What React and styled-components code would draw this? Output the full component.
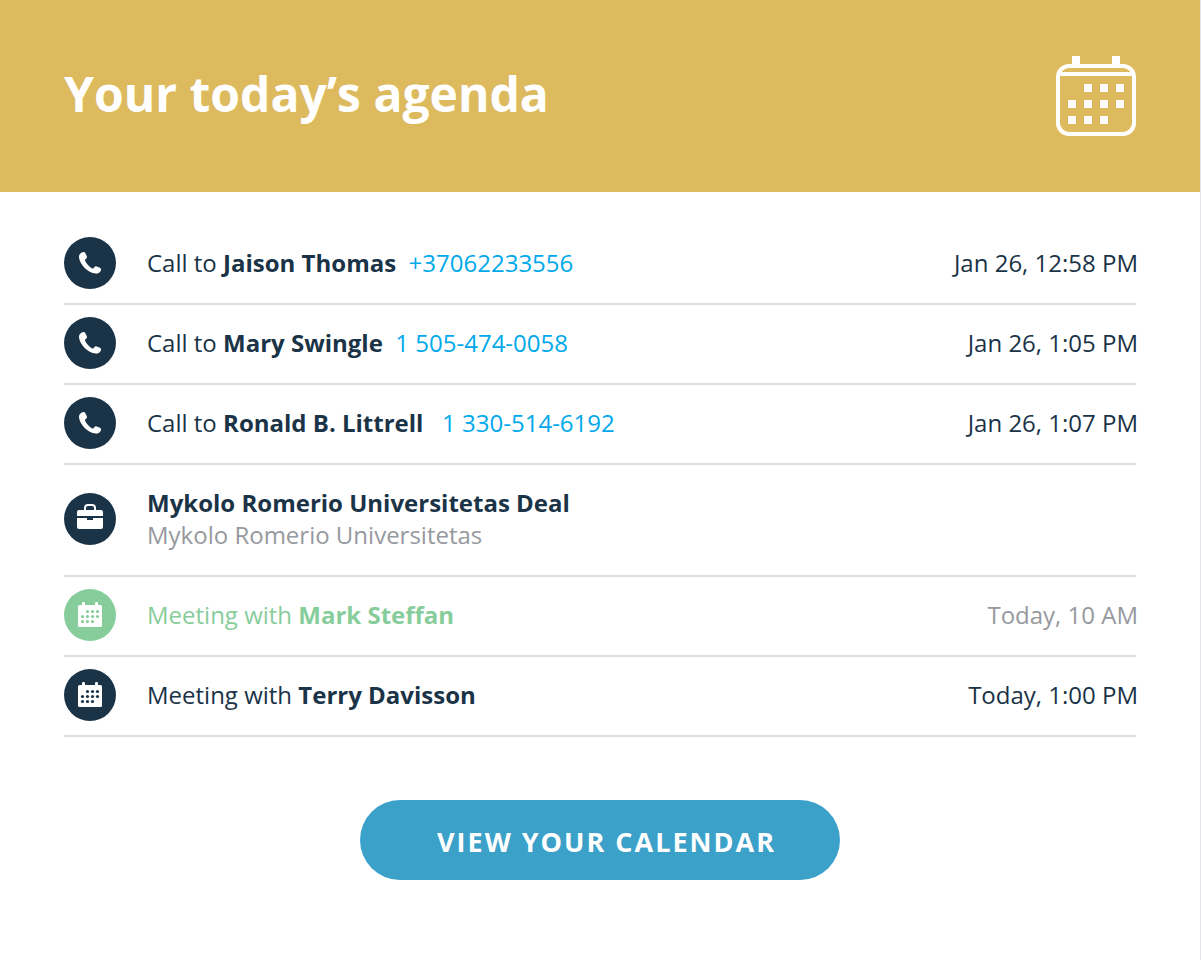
import styled, { createGlobalStyle } from 'styled-components';

const GlobalStyle = createGlobalStyle`
  * {
    box-sizing: border-box;
  }

  body {
    margin: 0;
    background: #fff;
    color: #1a3347;
    font-family: 'Open Sans', 'Noto Sans', sans-serif;
    font-size: 24px;
    line-height: 32px;
  }
`;

const Page = styled.div`
  min-height: 100vh;
  border-right: 1px solid #e4e4e7;
`;

const Header = styled.header`
  display: flex;
  align-items: center;
  justify-content: space-between;
  height: 192px;
  padding: 0 64px;
  background: #ddba5e;
  color: #fff;
`;

const Title = styled.h1`
  margin: 0;
  padding-bottom: 4px;
  font-size: 48px;
  line-height: 64px;
  font-weight: 700;
`;

const Main = styled.main`
  display: flex;
  flex-direction: column;
  align-items: center;
  padding: 33px 64px 80px;
`;

const List = styled.ul`
  align-self: stretch;
  margin: 0 0 63px;
  padding: 0;
  list-style: none;
`;

const Row = styled.li`
  display: flex;
  align-items: center;
  min-height: ${({ $tall }) => ($tall ? 112 : 80)}px;
  padding-bottom: 2px;
  border-bottom: 2px solid #dcdde1;
  color: ${({ $done }) => ($done ? '#87cd9b' : 'inherit')};
`;

const Badge = styled.span`
  display: flex;
  flex: none;
  width: 52px;
  height: 52px;
  margin-right: 31px;
  border-radius: 50%;
  background: ${({ $done }) => ($done ? '#87cd9b' : '#1a3347')};
  color: ${({ $done }) => ($done ? '#87cd9b' : '#1a3347')};
`;

const Details = styled.div`
  flex: 1;
  white-space: pre-wrap;
`;

const Phone = styled.a`
  color: #00a9eb;
  text-decoration: none;
`;

const Company = styled.div`
  color: #96999e;
`;

const Time = styled.time`
  margin-right: -2px;
  color: ${({ $done }) => ($done ? '#96999e' : 'inherit')};
`;

const CalendarButton = styled.button`
  height: 80px;
  padding: 2px 64px 0 77px;
  border: 0;
  border-radius: 40px;
  background: #3ba1c9;
  color: #fff;
  font-family: inherit;
  font-size: 27px;
  font-weight: 700;
  letter-spacing: 2px;
  cursor: pointer;
`;

const HeaderCalendar = () => (
  <svg width="80" height="80" viewBox="0 0 80 80" fill="#fff" aria-hidden="true">
    <rect x="2" y="10" width="76" height="68" rx="11" fill="none" stroke="#fff" strokeWidth="4" />
    <path d="M16 0h8v10h-8zM56 0h8v10h-8zM3 16h74v4H3z" />
    <path d="M28 28h8v8h-8zM44 28h8v8h-8zM60 28h8v8h-8z" />
    <path d="M12 44h8v8h-8zM28 44h8v8h-8zM44 44h8v8h-8zM60 44h8v8h-8z" />
    <path d="M12 60h8v8h-8zM28 60h8v8h-8zM44 60h8v8h-8z" />
  </svg>
);

const CallIcon = () => (
  <svg width="52" height="52" viewBox="0 0 52 52" fill="#fff" aria-hidden="true">
    <path d="M18.6 15.2c1.2-.4 2.3-.1 2.8 1l1.4 3c.4.9.2 1.7-.5 2.4l-1 .9c-.4.4-.4.8-.2 1.3 1.500 3.100 4 5.900 7 7.600.6.3 1 .2 1.400-.2l.9-1.100c.6-.8 1.400-1 2.300-.6l3.200 1.300c1.100.5 1.500 1.400 1.100 2.500-.8 2.200-2.900 3.600-5.300 3.300C23.600 35.500 16 27.700 15 20.400c-.3-2.400 1.200-4.400 3.600-5.200z" />
  </svg>
);

const DealIcon = () => (
  <svg width="52" height="52" viewBox="0 0 52 52" fill="#fff" aria-hidden="true">
    <path
      d="M21 17v-2q0-3 3-3h4q3 0 3 3v2"
      fill="none"
      stroke="#fff"
      strokeWidth="2"
    />
    <path d="M15 17h22q2 0 2 2v4H13v-4q0-2 2-2z" />
    <path d="M13 25h10v2h6v-2h10v9q0 2-2 2H15q-2 0-2-2z" />
  </svg>
);

const dots = [
  [23, 22], [28, 22], [33, 22],
  [18, 27], [23, 27], [28, 27], [33, 27],
  [18, 32], [23, 32], [28, 32],
];

const MeetingIcon = () => (
  <svg width="52" height="52" viewBox="0 0 52 52" fill="#fff" aria-hidden="true">
    <rect x="14" y="16" width="24" height="22" rx="1.5" />
    <rect x="18" y="13" width="3" height="6" rx="1.2" />
    <rect x="31" y="13" width="3" height="6" rx="1.2" />
    {dots.map(([x, y]) => (
      <circle key={`${x}-${y}`} cx={x + 0.5} cy={y + 0.5} r="1.6" fill="currentColor" />
    ))}
  </svg>
);

const icons = {
  call: CallIcon,
  deal: DealIcon,
  meeting: MeetingIcon,
};

const agenda = [
  { type: 'call', label: 'Call to ', name: 'Jaison Thomas', gap: '  ', phone: '+37062233556', time: 'Jan 26, 12:58 PM' },
  { type: 'call', label: 'Call to ', name: 'Mary Swingle', gap: '  ', phone: '1 505-474-0058', time: 'Jan 26, 1:05 PM' },
  { type: 'call', label: 'Call to ', name: 'Ronald B. Littrell', gap: '   ', phone: '1 330-514-6192', time: 'Jan 26, 1:07 PM' },
  { type: 'deal', name: 'Mykolo Romerio Universitetas Deal', company: 'Mykolo Romerio Universitetas' },
  { type: 'meeting', label: 'Meeting with ', name: 'Mark Steffan', time: 'Today, 10 AM', done: true },
  { type: 'meeting', label: 'Meeting with ', name: 'Terry Davisson', time: 'Today, 1:00 PM' },
];

const AgendaItem = ({ type, label, name, gap, phone, company, time, done }) => {
  const Icon = icons[type];

  return (
    <Row $tall={Boolean(company)} $done={done}>
      <Badge $done={done}>
        <Icon />
      </Badge>
      <Details>
        {label}
        <strong>{name}</strong>
        {gap}
        {phone && <Phone href={`tel:${phone.replace(/[ -]/g, '')}`}>{phone}</Phone>}
        {company && <Company>{company}</Company>}
      </Details>
      {time && <Time $done={done}>{time}</Time>}
    </Row>
  );
};

const App = () => {
  return (
    <>
      <GlobalStyle />
      <Page>
        <Header>
          <Title>Your today’s agenda</Title>
          <HeaderCalendar />
        </Header>
        <Main>
          <List>
            {agenda.map((item) => (
              <AgendaItem key={item.name} {...item} />
            ))}
          </List>
          <CalendarButton type="button">VIEW YOUR CALENDAR</CalendarButton>
        </Main>
      </Page>
    </>
  );
};

export default App;
